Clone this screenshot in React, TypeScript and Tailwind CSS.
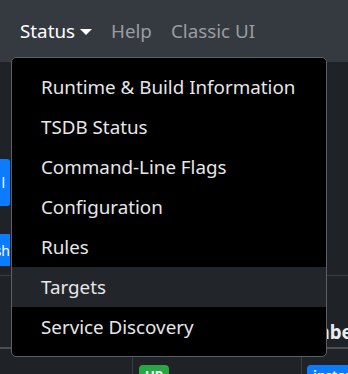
const statusItems = [
  "Runtime & Build Information",
  "TSDB Status",
  "Command-Line Flags",
  "Configuration",
  "Rules",
  "Targets",
  "Service Discovery",
];

export default function App() {
  return (
    <div className="relative h-[374px] w-[348px] overflow-hidden bg-[#1f2226] font-['Noto_Sans',sans-serif] text-[18.8px]">
      <nav className="flex h-[62px] items-center bg-[#343a40] pl-5">
        <button type="button" className="flex items-center gap-[5px] text-white">
          Status
          <span className="mt-[1px] h-0 w-0 border-x-[6px] border-t-[6px] border-x-transparent border-t-white" />
        </button>
        <span className="ml-[19px] text-[#9a9da1]">Help</span>
        <span className="ml-[19px] text-[#9a9da1]">Classic UI</span>
      </nav>

      <div className="pt-[97px] text-[14px]">
        <div className="flex h-[47px] w-[10px] items-center justify-end overflow-hidden rounded-r-[3px] bg-[#0b7bff] text-white">
          <span className="pr-[5px]">l</span>
        </div>
        <div className="mt-[28px] flex h-[32px] w-[10px] items-center justify-end overflow-hidden bg-[#0b7bff] text-white">
          <span className="whitespace-nowrap">sh</span>
        </div>
      </div>

      <div className="mt-[9px] border-t border-[#3a3e44]">
        <div className="flex h-[73px] items-end border-b-2 border-[#4a4f55] font-bold text-[#e9ecef]">
          <div className="w-[133px] shrink-0 px-3 pb-[1px]">Endpoint</div>
          <div className="w-[169px] shrink-0 px-3 pb-[1px]">State</div>
          <div className="whitespace-nowrap pb-[1px] pl-[6px]">Labels</div>
        </div>
        <div className="flex h-[40px]">
          <div className="w-[133px] shrink-0 border-r border-[#3a3e44]" />
          <div className="w-[169px] shrink-0 border-r border-[#3a3e44] pl-[6px] pt-[10px]">
            <span className="rounded-[4px] bg-[#28a745] px-[6px] py-[1px] text-[13px] font-bold text-white">UP</span>
          </div>
          <div className="pl-[5px] pt-[10px]">
            <span className="whitespace-nowrap rounded-[4px] bg-[#0b7bff] px-[6px] py-[1px] text-[13px] font-bold text-white">
              instance
            </span>
          </div>
        </div>
      </div>

      <div className="absolute left-[11px] top-[57px] w-[316px] rounded-[5px] border border-[#5b6066] bg-black py-[9px]">
        {statusItems.map((item) => (
          <div
            key={item}
            className={`flex h-[40px] items-center pl-[29px] text-[#e6e7e8] ${item === "Targets" ? "bg-[#222529]" : ""}`}
          >
            {item}
          </div>
        ))}
      </div>
    </div>
  );
}
